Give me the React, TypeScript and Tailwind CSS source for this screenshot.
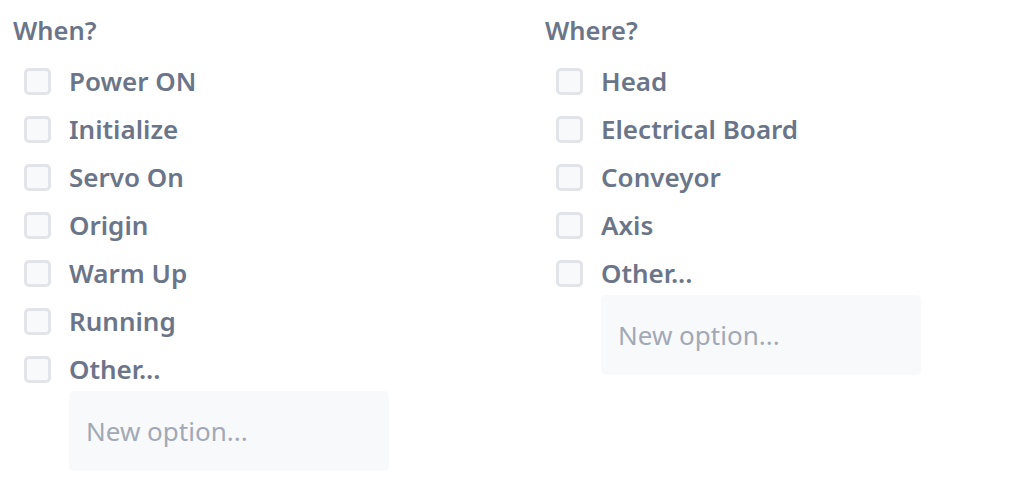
import React from 'react'

const whenOptions = ['Power ON', 'Initialize', 'Servo On', 'Origin', 'Warm Up', 'Running', 'Other...']
const whereOptions = ['Head', 'Electrical Board', 'Conveyor', 'Axis', 'Other...']

function OptionGroup({ title, options }: { title: string; options: string[] }) {
  return (
    <div className="w-[532px] shrink-0">
      <h3 className="text-[25.5px] leading-[32px] font-semibold text-[#6b7589]">{title}</h3>
      <div className="mt-[11px] flex flex-col">
        {options.map((option) => (
          <label key={option} className="flex h-[48px] items-center pl-[11px]">
            <span className="h-[27px] w-[27px] rounded-[5px] border-[3px] border-[#e2e4e9] bg-[#f8f9fb]" />
            <span className="ml-[18px] text-[26px] font-semibold text-[#6b7589]">{option}</span>
          </label>
        ))}
      </div>
      <input
        placeholder="New option..."
        className="ml-[56px] mt-[-2px] h-[80px] w-[320px] rounded-[5px] bg-[#f8f9fb] px-[17px] text-[26px] text-[#6b7589] outline-none placeholder:text-[#a2a9b6]"
      />
    </div>
  )
}

export default function App() {
  return (
    <div className="flex bg-white px-[13px] pt-[14px] font-['Noto_Sans',sans-serif]">
      <OptionGroup title="When?" options={whenOptions} />
      <OptionGroup title="Where?" options={whereOptions} />
    </div>
  )
}
